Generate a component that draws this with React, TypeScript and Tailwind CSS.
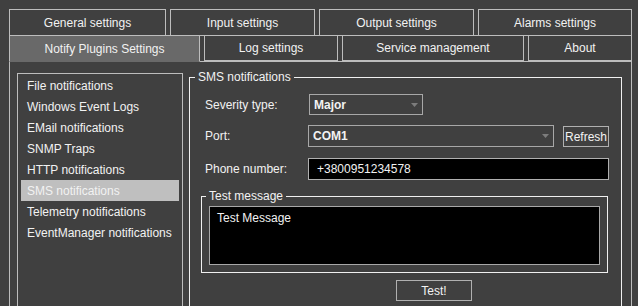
import React from "react";

type Tab = { label: string; w: string; active?: boolean };

const row1: Tab[] = [
  { label: "General settings", w: "w-[157px]" },
  { label: "Input settings", w: "w-[145px]" },
  { label: "Output settings", w: "w-[155px]" },
  { label: "Alarms settings", w: "w-[154px]" },
];

const row2: Tab[] = [
  { label: "Notify Plugins Settings", w: "w-[191px]", active: true },
  { label: "Log settings", w: "w-[134px]" },
  { label: "Service management", w: "w-[182px]" },
  { label: "About", w: "w-[104px]" },
];

const plugins = [
  "File notifications",
  "Windows Event Logs",
  "EMail notifications",
  "SNMP Traps",
  "HTTP notifications",
  "SMS notifications",
  "Telemetry notifications",
  "EventManager notifications",
];

function Arrow() {
  return (
    <svg width="7" height="4" viewBox="0 0 7 4" className="shrink-0">
      <path d="M0 0h7L3.5 4z" fill="#7c7c7c" />
    </svg>
  );
}

export default function App() {
  return (
    <div
      className="relative h-[306px] w-[638px] overflow-hidden bg-[#404040] pl-[9px] pt-[9px] text-[12px] leading-[14px] text-[#f2f2f2]"
      style={{ fontFamily: '"Segoe UI", "Liberation Sans", Arial, sans-serif' }}
    >
      {/* tab headers */}
      <div className="flex gap-[4px]">
        {row1.map((t) => (
          <div
            key={t.label}
            className={`${t.w} flex h-[27px] items-center justify-center border border-[#bdbdbd] bg-[#404040]`}
          >
            {t.label}
          </div>
        ))}
      </div>
      <div className="relative z-10 -mt-px flex gap-[4px]">
        {row2.map((t) => (
          <div
            key={t.label}
            className={`${t.w} flex h-[26px] items-center justify-center border ${
              t.active
                ? "h-[27px] border-[#bdbdbd] border-b-[#696969] bg-[#696969]"
                : "border-[#bdbdbd] bg-[#404040]"
            }`}
          >
            {t.label}
          </div>
        ))}
      </div>

      {/* tab page */}
      <div className="-mt-px flex h-[260px] w-[623px] items-start border border-[#bdbdbd] pl-[7px]">
        <div className="mt-[11px] h-[240px] w-[166px] shrink-0 border border-[#bdbdbd] px-[3px] pt-[1px]">
          {plugins.map((p) => (
            <div
              key={p}
              className={`flex h-[21px] items-center pl-[6px] ${
                p === "SMS notifications" ? "bg-[#bfbfbf]" : ""
              }`}
            >
              {p}
            </div>
          ))}
        </div>

        <fieldset className="ml-[6px] mt-[8px] h-[250px] w-[433px] shrink-0 border border-[#f0f0f0]">
          <legend className="ml-[5px] px-[3px] leading-[14px]">SMS notifications</legend>

          <div className="mt-[10px] flex h-[21px] items-center pl-[15px]">
            <span className="w-[104px]">Severity type:</span>
            <div className="flex h-[21px] w-[114px] items-center justify-between border border-[#a8a8a8] pl-[4px] pr-[4px]">
              <span className="font-bold">Major</span>
              <Arrow />
            </div>
          </div>

          <div className="mt-[10px] flex h-[22px] items-center pl-[15px]">
            <span className="w-[103px]">Port:</span>
            <div className="flex h-[22px] w-[246px] items-center justify-between border border-[#a8a8a8] pl-[4px] pr-[4px]">
              <span className="font-bold">COM1</span>
              <Arrow />
            </div>
            <button className="ml-[9px] mt-px flex h-[21px] w-[46px] items-center justify-center border border-[#b0b0b0] text-[12px]">
              Refresh
            </button>
          </div>

          <div className="mt-[11px] flex h-[22px] items-center pl-[15px]">
            <span className="w-[103px]">Phone number:</span>
            <div className="flex h-[22px] w-[301px] items-center border border-[#b0b0b0] bg-black pl-[8px]">
              +3800951234578
            </div>
          </div>

          <fieldset className="ml-[11px] mt-[9px] w-[407px] border border-[#f0f0f0] pb-[7px]">
            <legend className="ml-[4px] px-[3px] leading-[14px]">Test message</legend>
            <div className="ml-[7px] mt-[3px] h-[59px] w-[391px] border border-[#a8a8a8] bg-black pl-[7px] pt-[4px]">
              Test Message
            </div>
          </fieldset>

          <button className="ml-[206px] mt-[7px] flex h-[21px] w-[76px] items-center justify-center border border-[#b0b0b0]">
            Test!
          </button>
        </fieldset>
      </div>
    </div>
  );
}
